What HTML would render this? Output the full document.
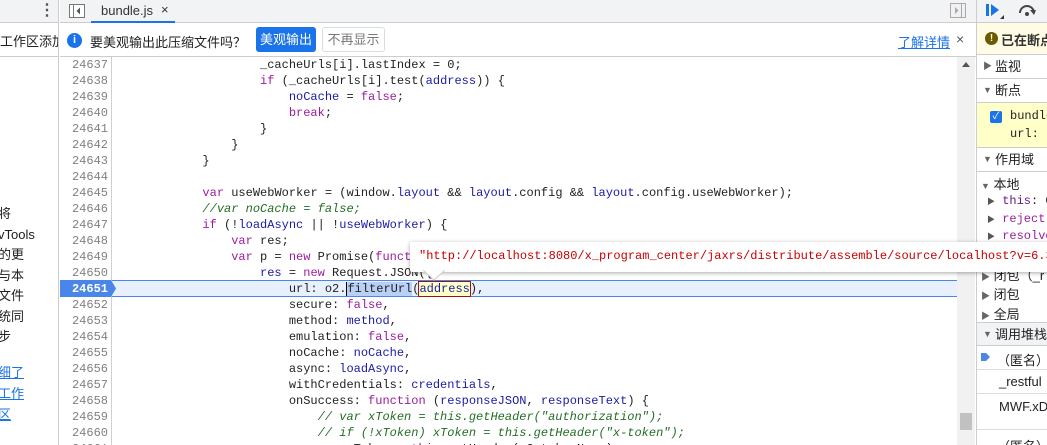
<!DOCTYPE html>
<html><head><meta charset="utf-8"><style>
*{margin:0;padding:0;box-sizing:border-box}
body{width:1047px;height:445px;overflow:hidden;position:relative;background:#fff;font-family:"Liberation Sans","Noto Sans CJK SC",sans-serif;font-size:13px;color:#202124}
.abs{position:absolute}
.mono{font-family:"Liberation Mono","Noto Sans CJK SC",monospace;font-size:12px}
#left{left:0;top:0;width:59px;height:445px;border-right:1px solid #cbcdd1;overflow:hidden}
#tabbar{left:60px;top:0;width:916px;height:23px;background:#f1f3f4;border-bottom:1px solid #cbcdd1}
#info{left:60px;top:23px;width:916px;height:34px;border-bottom:1px solid #cbcdd1;background:#fff}
#gutter{left:60px;top:57px;width:52px;height:388px;border-right:1px solid #d0d0d0;background:#fff}
.ln{position:absolute;left:0;width:48px;text-align:right;color:#808080;height:16px;line-height:16px}
.cl{position:absolute;left:116px;white-space:pre;height:16px;line-height:16px;color:#222}
.k{color:#9c1d9a}.v{color:#1a1aa6}.c{color:#236e25;font-style:italic}.s{color:#c80000}
#right{left:976px;top:0;width:71px;height:445px;border-left:1px solid #cbcdd1;background:#fff;overflow:hidden;white-space:nowrap}
.sec{position:absolute;left:0;width:71px;height:24px;line-height:23px;border-bottom:1px solid #cbcdd1;padding-left:18px;font-size:13px}
.tri{position:absolute;left:6px;top:0;font-size:9px;color:#666}
</style></head><body>

<div id="left" class="abs">
  <div class="abs" style="left:0;top:0;width:59px;height:23px;background:#f1f3f4;border-bottom:1px solid #cbcdd1"></div>
  <div class="abs" style="left:39px;top:2px;font-size:16px;color:#555;line-height:18px;font-weight:bold">⋮</div>
  <div class="abs" style="left:0;top:31px;font-size:13px;white-space:nowrap">工作区添加</div>
  <div class="abs" style="left:0;top:56px;width:59px;height:1px;background:#cbcdd1"></div>
  <div class="abs" style="left:-2px;top:204px;font-size:13px;line-height:20.5px;white-space:nowrap">将<br>vTools<br>的更<br>与本<br>文件<br>统同<br>步</div>
  <div class="abs" style="left:-2px;top:362px;font-size:13px;line-height:21px;color:#1a73e8;text-decoration:underline;white-space:nowrap">细了<br>工作<br>区</div>
</div>

<div id="tabbar" class="abs">
  <svg class="abs" style="left:9px;top:4px" width="16" height="14"><rect x="0.5" y="0.5" width="15" height="13" fill="#fff" stroke="#777"/><line x1="4.5" y1="1" x2="4.5" y2="13" stroke="#777"/><path d="M11 3.5 L7.5 7 L11 10.5Z" fill="#555"/></svg>
  <div class="abs" style="left:31px;top:0;width:84px;height:23px;border-bottom:2px solid #1a73e8"></div>
  <div class="abs" style="left:41px;top:3px;font-size:13px;color:#333">bundle.js</div>
  <div class="abs" style="left:101px;top:2px;font-size:13px;color:#333">×</div>
  <svg class="abs" style="left:890px;top:3px" width="16" height="15"><rect x="0.5" y="0.5" width="15" height="14" fill="#f1f1f1" stroke="#aaa"/><line x1="11.5" y1="1" x2="11.5" y2="14" stroke="#aaa"/><path d="M5 4 L8.5 7.5 L5 11Z" fill="#aaa"/></svg>
</div>

<div id="info" class="abs">
  <div class="abs" style="left:7px;top:10px;width:15px;height:15px;border-radius:50%;background:#1a73e8;color:#fff;font-size:11px;font-weight:bold;text-align:center;line-height:15px">i</div>
  <div class="abs" style="left:30px;top:9px;font-size:13px">要美观输出此压缩文件吗？</div>
  <div class="abs" style="left:196px;top:4px;width:60px;height:25px;background:#1a73e8;border-radius:3px;color:#fff;text-align:center;line-height:25px;font-size:13px">美观输出</div>
  <div class="abs" style="left:262px;top:4px;width:63px;height:25px;border:1px solid #dadce0;border-radius:3px;color:#777;text-align:center;line-height:23px;font-size:13px">不再显示</div>
  <div class="abs" style="left:838px;top:9px;font-size:13px;color:#1a73e8;text-decoration:underline">了解详情</div>
  <div class="abs" style="left:896px;top:8px;font-size:14px;color:#555">×</div>
</div>

<div id="gutter" class="abs mono"></div>
<div id="code" class="abs mono" style="left:0;top:57px;width:957px;height:388px;overflow:hidden">
  <div class="abs" style="left:112px;top:223px;width:845px;height:17px;background:#e8effd;border-top:1px solid #4a86e8;border-bottom:1px solid #4a86e8"></div>
  <svg class="abs" style="left:60px;top:223px" width="58" height="17"><path d="M0 0 H51 L56 8.5 L51 17 H0Z" fill="#4a86e8"/></svg>
  <div class="ln" style="left:60px;top:0">24637</div>
  <div class="ln" style="left:60px;top:16px">24638</div>
  <div class="ln" style="left:60px;top:32px">24639</div>
  <div class="ln" style="left:60px;top:48px">24640</div>
  <div class="ln" style="left:60px;top:64px">24641</div>
  <div class="ln" style="left:60px;top:80px">24642</div>
  <div class="ln" style="left:60px;top:96px">24643</div>
  <div class="ln" style="left:60px;top:112px">24644</div>
  <div class="ln" style="left:60px;top:128px">24645</div>
  <div class="ln" style="left:60px;top:144px">24646</div>
  <div class="ln" style="left:60px;top:160px">24647</div>
  <div class="ln" style="left:60px;top:176px">24648</div>
  <div class="ln" style="left:60px;top:192px">24649</div>
  <div class="ln" style="left:60px;top:208px">24650</div>
  <div class="ln" style="left:60px;top:224px;color:#fff;font-weight:bold">24651</div>
  <div class="ln" style="left:60px;top:240px">24652</div>
  <div class="ln" style="left:60px;top:256px">24653</div>
  <div class="ln" style="left:60px;top:272px">24654</div>
  <div class="ln" style="left:60px;top:288px">24655</div>
  <div class="ln" style="left:60px;top:304px">24656</div>
  <div class="ln" style="left:60px;top:320px">24657</div>
  <div class="ln" style="left:60px;top:336px">24658</div>
  <div class="ln" style="left:60px;top:352px">24659</div>
  <div class="ln" style="left:60px;top:368px">24660</div>
  <div class="ln" style="left:60px;top:384px">24661</div>

  <div class="cl" style="top:0">                    _cacheUrls[i].lastIndex = 0;</div>
  <div class="cl" style="top:16px">                    <span class="k">if</span> (_cacheUrls[i].test(<span class="v">address</span>)) {</div>
  <div class="cl" style="top:32px">                        <span class="v">noCache</span> = <span class="k">false</span>;</div>
  <div class="cl" style="top:48px">                        <span class="k">break</span>;</div>
  <div class="cl" style="top:64px">                    }</div>
  <div class="cl" style="top:80px">                }</div>
  <div class="cl" style="top:96px">            }</div>
  <div class="cl" style="top:128px">            <span class="k">var</span> useWebWorker = (window.<span class="v">layout</span> &amp;&amp; <span class="v">layout</span>.config &amp;&amp; <span class="v">layout</span>.config.useWebWorker);</div>
  <div class="cl c" style="top:144px">            //var noCache = false;</div>
  <div class="cl" style="top:160px">            <span class="k">if</span> (!<span class="v">loadAsync</span> || !<span class="v">useWebWorker</span>) {</div>
  <div class="cl" style="top:176px">                <span class="k">var</span> res;</div>
  <div class="cl" style="top:192px">                <span class="k">var</span> p = <span class="k">new</span> Promise(<span class="k">function</span></div>
  <div class="cl" style="top:208px">                    <span class="v">res</span> = <span class="k">new</span> Request.JSON({</div>
  <div class="cl" style="top:224px">                        url: o2.<span style="background:#b9cff5;border-left:1px solid #000">filterUrl</span>(<span class="v" style="background:#ffffc8;outline:1px solid #a01010">address</span>),</div>
  <div class="cl" style="top:240px">                        secure: <span class="k">false</span>,</div>
  <div class="cl" style="top:256px">                        method: <span class="v">method</span>,</div>
  <div class="cl" style="top:272px">                        emulation: <span class="k">false</span>,</div>
  <div class="cl" style="top:288px">                        noCache: <span class="v">noCache</span>,</div>
  <div class="cl" style="top:304px">                        async: <span class="v">loadAsync</span>,</div>
  <div class="cl" style="top:320px">                        withCredentials: <span class="v">credentials</span>,</div>
  <div class="cl" style="top:336px">                        onSuccess: <span class="k">function</span> (<span class="v">responseJSON</span>, <span class="v">responseText</span>) {</div>
  <div class="cl c" style="top:352px">                            // var xToken = this.getHeader("authorization");</div>
  <div class="cl c" style="top:368px">                            // if (!xToken) xToken = this.getHeader("x-token");</div>
  <div class="cl" style="top:384px">                            <span class="k">var</span> xToken = <span class="k">this</span>.getHeader(o2.tokenName);</div>
</div>

<div class="abs" style="left:957px;top:57px;width:18px;height:388px;background:#f1f1f1"></div>
<div class="abs" style="left:962px;top:62px;width:0;height:0;border-left:4px solid transparent;border-right:4px solid transparent;border-bottom:5px solid #555"></div>
<div class="abs" style="left:960px;top:413px;width:12px;height:17px;background:#c1c1c1"></div>

<div id="right" class="abs">
  <div class="abs" style="left:0;top:0;width:71px;height:23px;background:#f1f3f4;border-bottom:1px solid #cbcdd1"></div>
  <svg class="abs" style="left:9px;top:3px" width="20" height="17"><rect x="0" y="1" width="3" height="12" fill="#1a73e8"/><path d="M5 1 L13 7 L5 13Z" fill="#1a73e8"/><path d="M14 16 L18 12 L18 16Z" fill="#333"/></svg>
  <svg class="abs" style="left:40px;top:4px" width="20" height="14"><path d="M3 9 A7 7 0 0 1 17 9" fill="none" stroke="#444" stroke-width="2"/><path d="M13 6 L19 6 L17 11Z" fill="#444"/><circle cx="10" cy="10" r="2" fill="#444"/></svg>
  <div class="abs" style="left:0;top:23px;width:71px;height:32px;background:#fffbe5;border-bottom:1px solid #cbcdd1"></div>
  <div class="abs" style="left:8px;top:32px;width:13px;height:13px;border-radius:50%;background:#6b5a00;color:#fffbe5;font-size:10px;font-weight:bold;text-align:center;line-height:13px">!</div>
  <div class="abs" style="left:24px;top:30px;font-size:13px;font-weight:bold;color:#333">已在断点</div>
  <div class="sec" style="top:55px"><span class="tri">▶</span>监视</div>
  <div class="sec" style="top:79px"><span class="tri">▼</span>断点</div>
  <div class="abs" style="left:0;top:103px;width:71px;height:45px;background:#ffffc8;border-bottom:1px solid #cbcdd1"></div>
  <div class="abs" style="left:13px;top:111px;width:12px;height:12px;background:#1a73e8;border-radius:2px;color:#fff;font-size:10px;line-height:12px;text-align:center">✓</div>
  <div class="abs mono" style="left:33px;top:109px;color:#222">bundle</div>
  <div class="abs mono" style="left:33px;top:127px;color:#222">url: <span class="s">"</span></div>
  <div class="sec" style="top:148px"><span class="tri">▼</span>作用域</div>
  <div class="abs" style="left:4px;top:174px;font-size:13px"><span style="font-size:9px;color:#666">▼</span> 本地</div>
  <div class="abs mono" style="left:10px;top:194px"><span style="font-size:8px;color:#555">▶</span> <span style="color:#6a1a8a">this</span>: <span>C</span></div>
  <div class="abs mono" style="left:10px;top:212px"><span style="font-size:8px;color:#555">▶</span> <span style="color:#9c1d9a">reject</span></div>
  <div class="abs mono" style="left:10px;top:229px"><span style="font-size:8px;color:#555">▶</span> <span style="color:#9c1d9a">resolve</span></div>
  <div class="abs" style="left:4px;top:265px;font-size:13px"><span style="font-size:9px;color:#666">▶</span> 闭包（_r</div>
  <div class="abs" style="left:4px;top:284px;font-size:13px"><span style="font-size:9px;color:#666">▶</span> 闭包</div>
  <div class="abs" style="left:4px;top:304px;font-size:13px"><span style="font-size:9px;color:#666">▶</span> 全局</div>
  <div class="sec" style="top:322px;background:#f1f3f4;border-top:1px solid #cbcdd1"><span class="tri">▼</span>调用堆栈</div>
  <div class="abs" style="left:0;top:346px;width:71px;height:24px;border-bottom:1px solid #ddd"></div>
  <svg class="abs" style="left:4px;top:352px" width="10" height="10"><path d="M0 1 H5 L9 5 L5 9 H0Z" fill="#4a86e8"/></svg>
  <div class="abs" style="left:20px;top:350px;font-size:13px">（匿名）</div>
  <div class="abs" style="left:0;top:370px;width:71px;height:24px;border-bottom:1px solid #ddd"></div>
  <div class="abs" style="left:22px;top:374px;font-size:13px">_restful</div>
  <div class="abs" style="left:0;top:394px;width:71px;height:36px;border-bottom:1px solid #ddd"></div>
  <div class="abs" style="left:22px;top:399px;font-size:13px">MWF.xDesktop</div>
  <div class="abs" style="left:20px;top:436px;font-size:13px">（匿名）</div>
</div>

<div class="abs" style="left:410px;top:242px;width:660px;height:30px;background:#fff;box-shadow:0 1px 4px rgba(0,0,0,.35);border-radius:2px"></div>
<svg class="abs" style="left:423px;top:270px" width="22" height="11"><path d="M0 0 L11 10 L22 0Z" fill="#fff"/><path d="M0 0 L11 10 L22 0" fill="none" stroke="#ccc"/></svg>
<div class="abs mono s" style="left:419px;top:249px;white-space:nowrap">"http://localhost:8080/x_program_center/jaxrs/distribute/assemble/source/localhost?v=6.3</div>
</body></html>
